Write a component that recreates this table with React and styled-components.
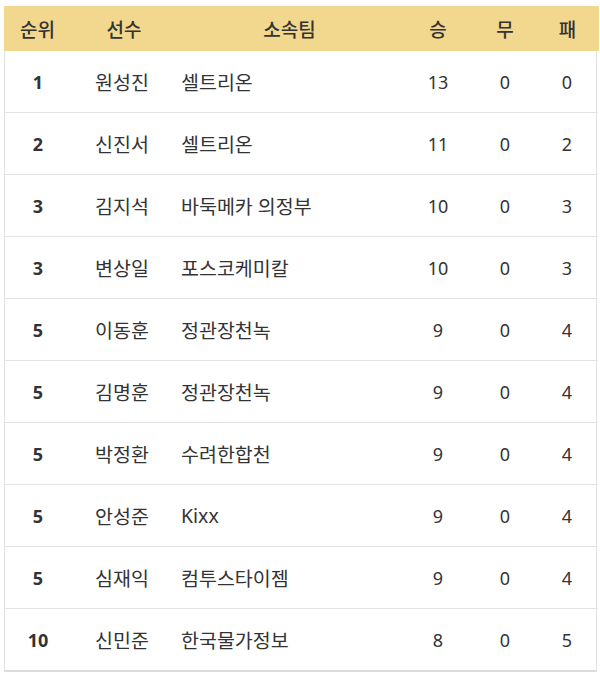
import styled, { createGlobalStyle } from "styled-components";

const GlobalStyle = createGlobalStyle`
  body {
    margin: 0;
    background: #ffffff;
    font-family: "Noto Sans", "Noto Sans CJK KR", sans-serif;
    color: #333333;
  }
`;

const Page = styled.div`
  padding: 6px 3px 0 4px;
`;

const Table = styled.div`
  display: grid;
  grid-template-columns: 66px 106px 225px 72px 62px 62px;
  border-left: 1px solid #e2e2e2;
  border-right: 1px solid #e2e2e2;
  border-bottom: 2px solid #dcdcdc;
`;

const HeadCell = styled.div`
  height: 45px;
  display: flex;
  align-items: center;
  justify-content: center;
  background: #f2d78e;
  font-size: 19px;
  font-weight: 500;
  color: #333;
  margin-left: ${(p) => (p.$first ? "-1px" : "0")};
  margin-right: ${(p) => (p.$last ? "-1px" : "0")};
`;

const Cell = styled.div`
  height: 61px;
  display: flex;
  align-items: center;
  justify-content: ${(p) => (p.$left ? "flex-start" : "center")};
  padding-left: ${(p) => p.$pad || 0}px;
  border-top: ${(p) => (p.$noTop ? "none" : "1px solid #e2e2e2")};
  font-size: ${(p) => (p.$text ? "19.5px" : "18px")};
  font-weight: ${(p) => (p.$bold ? 700 : 400)};
  color: #333;
`;

const rows = [
  ["1", "원성진", "셀트리온", 13, 0, 0],
  ["2", "신진서", "셀트리온", 11, 0, 2],
  ["3", "김지석", "바둑메카 의정부", 10, 0, 3],
  ["3", "변상일", "포스코케미칼", 10, 0, 3],
  ["5", "이동훈", "정관장천녹", 9, 0, 4],
  ["5", "김명훈", "정관장천녹", 9, 0, 4],
  ["5", "박정환", "수려한합천", 9, 0, 4],
  ["5", "안성준", "Kixx", 9, 0, 4],
  ["5", "심재익", "컴투스타이젬", 9, 0, 4],
  ["10", "신민준", "한국물가정보", 8, 0, 5],
];

const heads = ["순위", "선수", "소속팀", "승", "무", "패"];

export default function App() {
  return (
    <Page>
      <GlobalStyle />
      <Table>
        {heads.map((h, i) => (
          <HeadCell key={h} $first={i === 0} $last={i === heads.length - 1}>
            {h}
          </HeadCell>
        ))}
        {rows.map((r, ri) => {
          const first = ri === 0;
          return [
            <Cell key={`a${ri}`} $bold $noTop={first}>
              {r[0]}
            </Cell>,
            <Cell key={`b${ri}`} $left $text $pad={24} $noTop={first}>
              {r[1]}
            </Cell>,
            <Cell key={`c${ri}`} $left $text $pad={4} $noTop={first}>
              {r[2]}
            </Cell>,
            <Cell key={`d${ri}`} $noTop={first}>
              {r[3]}
            </Cell>,
            <Cell key={`e${ri}`} $noTop={first}>
              {r[4]}
            </Cell>,
            <Cell key={`f${ri}`} $noTop={first}>
              {r[5]}
            </Cell>,
          ];
        })}
      </Table>
    </Page>
  );
}
